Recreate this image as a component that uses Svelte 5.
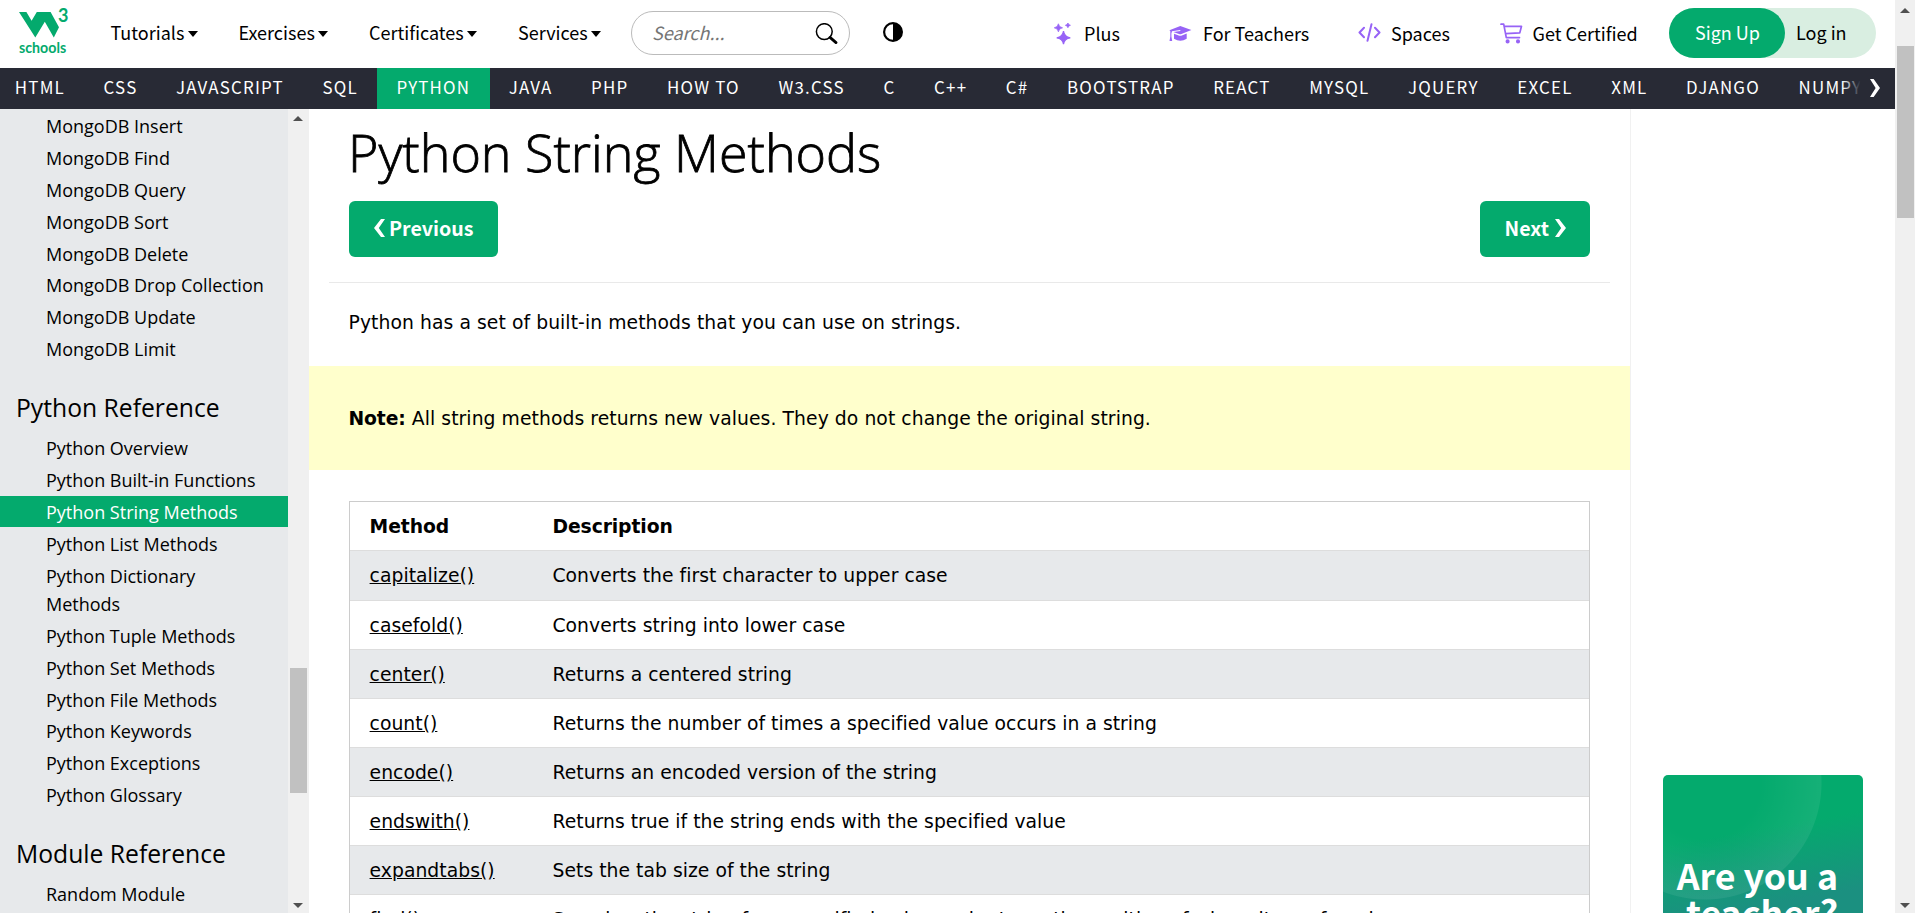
<script>
  const menus = [
    { label: 'Tutorials', width: 128 },
    { label: 'Exercises', width: 130.5 },
    { label: 'Certificates', width: 149 },
    { label: 'Services', width: 113 }
  ];
  const topics = ['HTML', 'CSS', 'JAVASCRIPT', 'SQL', 'PYTHON', 'JAVA', 'PHP', 'HOW TO', 'W3.CSS', 'C', 'C++', 'C#',
    'BOOTSTRAP', 'REACT', 'MYSQL', 'JQUERY', 'EXCEL', 'XML', 'DJANGO', 'NUMPY'];
  const mongo = ['Insert', 'Find', 'Query', 'Sort', 'Delete', 'Drop Collection', 'Update', 'Limit'];
  const sections = [
    { title: '', items: mongo.map((m) => 'MongoDB ' + m) },
    {
      title: 'Python Reference',
      items: ['Python Overview', 'Python Built-in Functions', 'Python String Methods', 'Python List Methods',
        'Python Dictionary Methods', 'Python Tuple Methods', 'Python Set Methods', 'Python File Methods',
        'Python Keywords', 'Python Exceptions', 'Python Glossary']
    },
    { title: 'Module Reference', items: ['Random Module'] }
  ];
  const methods = [
    ['capitalize()', 'Converts the first character to upper case'],
    ['casefold()', 'Converts string into lower case'],
    ['center()', 'Returns a centered string'],
    ['count()', 'Returns the number of times a specified value occurs in a string'],
    ['encode()', 'Returns an encoded version of the string'],
    ['endswith()', 'Returns true if the string ends with the specified value'],
    ['expandtabs()', 'Sets the tab size of the string'],
    ['find()', 'Searches the string for a specified value and returns the position of where it was found']
  ];
</script>

<div class="page">
  <div class="site">
    <header>
      <a class="logo" href="#home" aria-label="W3Schools">
        <span class="mark">
          <svg width="42" height="28" viewBox="0 0 42 28"><path d="M0 1H7.4L12.6 9.8L17.8 1H31.6L40 16.3L34.8 26.4L25.8 10.8L16.3 26.4Z" fill="#04aa6d" /></svg>
          <sup>3</sup>
        </span>
        <span class="schools">schools</span>
      </a>
      <nav class="menus">
        {#each menus as m}
          <a href="#menu" style="width:{m.width}px">{m.label}<i class="caret"></i></a>
        {/each}
      </nav>
      <div class="search">
        <span>Search...</span>
        <svg width="23" height="21" viewBox="0 0 23 21" fill="none" stroke="#000"><circle cx="9.3" cy="8.6" r="7.9" stroke-width="1.5" /><path d="M15 14.4L21 19.6" stroke-width="2.8" stroke-linecap="round" /></svg>
      </div>
      <svg class="contrast" width="20" height="20" viewBox="0 0 20 20"><circle cx="10" cy="10" r="8.9" fill="#fff" stroke="#000" stroke-width="2.2" /><path d="M10 1A9 9 0 0 1 10 19Z" /></svg>

      <nav class="links">
        <a href="#plus" style="width:115px">
          <svg width="17" height="22" viewBox="0 0 17 22" fill="#9763f6"><path d="M9.5 8.2Q10.3 14.2 16.3 14.8Q10.3 15.4 9.5 21.2Q8.7 15.4 2.7 14.8Q8.7 14.2 9.5 8.2Z" stroke="#9763f6" stroke-width="1.2" /><path d="M4.4.8Q4.9 4.3 8.5 4.8Q4.9 5.3 4.4 8.8Q3.9 5.3.3 4.8Q3.9 4.3 4.4.8ZM13.9 0Q14.2 2 16.4 2.3Q14.2 2.6 13.9 4.7Q13.6 2.6 11.4 2.3Q13.6 2 13.9 0Z" stroke="#9763f6" stroke-width=".8" /></svg>
          <span class="l1">Plus</span>
        </a>
        <a href="#teachers" style="width:189px">
          <svg class="cap" width="23" height="16" viewBox="0 0 23 16" fill="#9763f6"><path d="M11.3 0L22.4 4L11.8 8.2Q11.3 8.4 10.7 8.2L4.3 5.9L11.4 4.9L11.2 4.1L3 5.2L2.4 7.5V10.6L3.2 15H.5L1.3 10.6V5.1L.4 4.2Z" /><path d="M5 7.7L10.4 9.7Q11.3 10 12.2 9.7L17.7 7.6V12.7Q11.4 16.8 5 12.7Z" /></svg>
          <span class="l2">For Teachers</span>
        </a>
        <a href="#spaces" style="width:141.5px">
          <svg width="23" height="19" viewBox="0 0 23 19" fill="none" stroke="#9763f6" stroke-width="2" stroke-linecap="round" stroke-linejoin="round"><path d="M6 4.8L1.5 9.5L6 14.2M17 4.8L21.5 9.5L17 14.2M13.5 1.2L9.5 17.8" /></svg>
          <span class="l3">Spaces</span>
        </a>
        <a href="#cert">
          <svg width="23" height="21" viewBox="0 0 23 21" fill="none" stroke="#9763f6" stroke-width="1.7" stroke-linecap="round" stroke-linejoin="round"><path d="M1 1.2H3.7L6.3 14.6H19.5M4.2 3.3H21.5L19.8 9.8L5.6 10.6" /><circle cx="7.6" cy="18.4" r="1.2" fill="#9763f6" /><circle cx="18" cy="18.4" r="1.2" fill="#9763f6" /></svg>
          <span class="l4">Get Certified</span>
        </a>
      </nav>
      <div class="auth">
        <a class="signup" href="#signup">Sign Up</a>
        <a class="login" href="#login">Log in</a>
      </div>
    </header>

    <nav class="topics">
      <div class="strip">
        {#each topics as t}
          <a href="#topic" class:active={t === 'PYTHON'}>{t}</a>
        {/each}
      </div>
      <span class="more"><svg width="10" height="18" viewBox="0 0 11 18" preserveAspectRatio="none"><path d="M0 0H4L11 9L4 18H0L6.2 9Z" fill="#fff" /></svg></span>
    </nav>

    <div class="body">
      <aside class="side">
        <div class="menu">
          {#each sections as s}
            {#if s.title}<h2>{s.title}</h2>{/if}
            {#each s.items as item}
              <a href="#item" class:active={item === 'Python String Methods'}>{item}</a>
            {/each}
          {/each}
        </div>
        <div class="bar inner">
          <i class="up"></i>
          <i class="thumb"></i>
          <i class="down"></i>
        </div>
      </aside>

      <main>
        <h1>Python String Methods</h1>
        <div class="pager">
          <a href="#prev"><svg width="11" height="18" viewBox="0 0 11 18"><path d="M11 0H7L0 9L7 18H11L4.8 9Z" fill="#fff" /></svg><span>Previous</span></a>
          <a href="#next"><span>Next</span><svg width="11" height="18" viewBox="0 0 11 18"><path d="M0 0H4L11 9L4 18H0L6.2 9Z" fill="#fff" /></svg></a>
        </div>
        <hr />
        <p class="intro">Python has a set of built-in methods that you can use on strings.</p>
        <p class="note"><b>Note:</b> All string methods returns new values. They do not change the original string.</p>
        <div class="table">
          <div class="row head"><span>Method</span><span>Description</span></div>
          {#each methods as [name, text]}
            <div class="row"><span><a href="#method">{name}</a></span><span>{text}</span></div>
          {/each}
        </div>
      </main>

      <div class="rail">
        <div class="ad"><span>Are you a<br />teacher?</span></div>
      </div>
    </div>
  </div>
  <div class="bar outer">
    <i class="up"></i>
    <i class="thumb"></i>
    <i class="down"></i>
  </div>
</div>

<style>
  :global(body) { overflow: hidden; background: #fff; }
  .page { display: flex; width: 1915px; height: 913px; overflow: hidden; color: #000; font-family: "DejaVu Sans", sans-serif; }
  .page * { box-sizing: border-box; }
  a { color: inherit; text-decoration: none; }
  svg { display: block; flex: none; }
  .site { width: 1895px; display: flex; flex-direction: column; }

  header { height: 68px; flex: none; display: flex; align-items: flex-start; font: 18px/26px "Noto Sans CJK SC", sans-serif; white-space: nowrap; }
  .logo { width: 110.5px; padding: 11px 0 0 19px; color: #04aa6d; font-family: Lato, sans-serif; }
  .mark { display: flex; height: 28px; position: relative; }
  .mark sup { position: absolute; left: 39px; top: -5px; font-size: 18px; line-height: 18px; font-weight: 700; }
  .schools { display: block; font-size: 14.2px; line-height: 18px; font-weight: 700; }
  .menus { display: flex; padding-top: 19px; }
  .menus a { display: flex; }
  .caret { margin: 12px 0 0 3.5px; width: 0; height: 0; border: 5.8px solid transparent; border-top: 6.8px solid #000; border-bottom: 0; }
  .search { width: 219px; height: 44px; margin-top: 11px; border: 1px solid #bbb; border-radius: 22px; display: flex; justify-content: space-between; padding: 7px 11px 0 20px; font-style: italic; color: #757575; }
  .search svg { margin-top: 4px; }
  .contrast { margin: 22px 0 0 33px; }
  .links { display: flex; margin-left: 151px; padding-top: 20px; width: 615px; }
  .links a { display: flex; }
  .links svg { margin-top: 3px; }
  .links .cap { margin-top: 6px; }
  .links span { margin-left: 13px; }
  .links .l2 { margin-left: 11px; }
  .links .l3 { margin-left: 10px; }
  .links .l4 { margin-left: 10px; }
  .auth { display: flex; width: 207px; height: 50px; margin-top: 8px; border-radius: 25px; background: #d9eee1; }
  .auth a { padding-top: 11px; }
  .signup { width: 116px; padding-left: 1px; border-radius: 25px; background: #04aa6d; color: #fff; text-align: center; }
  .login { padding-left: 11px; }

  .topics { position: relative; height: 41px; flex: none; overflow: hidden; background: #282a35; color: #fff; }
  .strip { display: flex; height: 41px; margin-left: -4.5px; font: 16.9px/37px "Noto Sans CJK SC", sans-serif; letter-spacing: 1.22px; }
  .strip a { padding: 0 19.3px; white-space: nowrap; }
  .strip .active { background: #04aa6d; }
  .more { position: absolute; right: 0; top: 0; width: 53px; height: 41px; padding: 11px 0 0 28px; background: linear-gradient(90deg, #282a3500, #282a35 35%); }

  .body { flex: 1; min-height: 0; display: flex; }
  .side { width: 309px; display: flex; overflow: hidden; background: #e7e9eb; }
  .menu { width: 288px; padding-top: .6px; font: 18px/28.125px "Open Sans", sans-serif; }
  .menu a { display: block; padding: 2.6px 20px 1.15px 46px; }
  .menu .active { background: #04aa6d; color: #fff; }
  .menu h2 { margin: 24.9px 0 5.45px 16px; font-size: 24.7px; line-height: 37px; font-weight: 400; }

  .bar { position: relative; background: #f0f0f0; }
  .bar i { position: absolute; }
  .up, .down { border: 5px solid transparent; }
  .bar .up { border-top: 0; border-bottom-color: #505050; }
  .bar .down { border-bottom: 0; border-top-color: #505050; bottom: 5px; }
  .thumb { width: 17px; background: #c1c1c1; }
  .inner { width: 21px; }
  .inner .up, .inner .down { left: 5px; }
  .inner .up { top: 7px; }
  .inner .thumb { left: 2px; top: 559px; height: 125px; }
  .outer { width: 20px; }
  .outer .up, .outer .down { left: 5px; }
  .outer .up { top: 8px; }
  .outer .thumb { left: 2px; top: 46px; height: 172px; }

  main { width: 1322px; border-right: 1px solid #f1f1f1; overflow: hidden; font-size: 18.75px; line-height: 28px; letter-spacing: .075px; }
  h1 { margin: 12px 0 0 39px; font: 300 52px/61px "Open Sans", sans-serif; letter-spacing: 0; -webkit-text-stroke: .8px #000; }
  .pager { display: flex; justify-content: space-between; margin: 19px 40px 0; font: 700 19.6px/53px "Noto Sans CJK SC", sans-serif; letter-spacing: 0; color: #fff; }
  .pager a { display: flex; height: 56px; padding: 0 24.5px 0 25px; border-radius: 6px; background: #04aa6d; }
  .pager svg { margin: 18px 0 0 5.5px; }
  .pager a:first-child svg { margin-left: 0; margin-right: 4px; }
  hr { height: 1px; margin: 25px 20px 0; border: 0; background: #e9e9e9; }
  .intro { margin: 26px 39.5px 29px; }
  .note { margin: 0; height: 104px; padding: 39px 39.5px; background: #ffffcc; }
  .note b, .head { letter-spacing: -.1px; }
  .table { margin: 31px 40px 0; border: 1px solid #ccc; letter-spacing: .035px; }
  .row { display: flex; height: 49px; padding: 11px 0 0 19.6px; border-top: 1px solid #ddd; }
  .row span:first-child { width: 182.9px; }
  .row a { text-decoration: underline; }
  .row:nth-child(even) { background: #e7e9eb; }
  .row:nth-child(2) { height: 50px; }
  .head { border-top: 0; height: 48px; font-weight: 700; }

  .rail { flex: 1; padding: 666px 0 0 32px; }
  .ad { position: relative; width: 200px; height: 200px; padding: 81px 25px 0 0; overflow: hidden; border-radius: 5px; background: radial-gradient(circle at 42px 8px, #ffffff00 55px, #ffffff12 116px, #ffffff00 117px), linear-gradient(170deg, #04aa6d 30%, #1b9080 63%); color: #fff; text-align: right; font: 700 35.7px/37px "Noto Sans CJK SC", sans-serif; }
</style>
